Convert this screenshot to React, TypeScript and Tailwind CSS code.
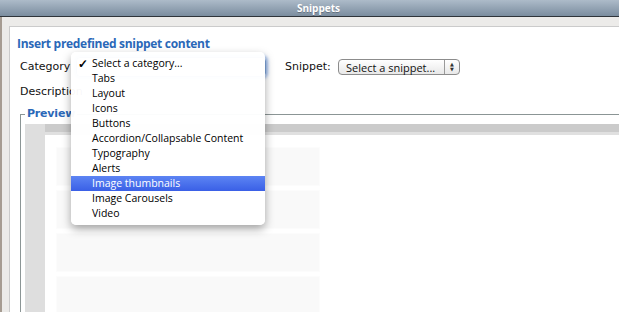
import React from "react";

const items = [
  "Select a category...",
  "Tabs",
  "Layout",
  "Icons",
  "Buttons",
  "Accordion/Collapsable Content",
  "Typography",
  "Alerts",
  "Image thumbnails",
  "Image Carousels",
  "Video",
];

export default function App() {
  return (
    <div className="relative w-[619px] h-[312px] overflow-hidden bg-[#ecebe9] font-['DejaVu_Sans',sans-serif]">
      <div className="h-[17px] bg-gradient-to-b from-[#adbbc9] to-[#7b8d9f] border-b border-[#2f343a] flex items-center justify-center pl-[18px]">
        <span className="text-white font-bold text-[10px] leading-none font-['Open_Sans',sans-serif] [text-shadow:0_1px_0_rgba(0,0,0,0.25)]">Snippets</span>
      </div>
      <div className="flex h-[295px]">
        <div className="w-[2px] bg-[#a69c92]" />
        <div className="flex-1 pt-[9px] pl-[7px] flex flex-col">
          <div className="flex-1 bg-white border-l border-t border-[#cbcbcb] pl-[7px] pt-[9px] flex flex-col">
            <h1 className="text-[#2a68b8] font-bold text-[12px] leading-[16px] tracking-[-0.3px] font-['Open_Sans',sans-serif]">Insert predefined snippet content</h1>
            <div className="flex items-center mt-[5px] pl-[3px] h-[20px] text-[11px] text-[#111]">
              <span className="w-[56px]">Category</span>
              <div className="w-[190px] h-[20px] rounded-[4px] border border-[#7fa6dc] shadow-[0_0_3px_2px_rgba(100,150,230,0.6)]" />
              <span className="ml-[19px] w-[53px]">Snippet:</span>
              <div className="w-[122px] h-[16px] rounded-[4px] border border-[#8c8c8c] bg-gradient-to-b from-white to-[#e8e8e8] flex items-center">
                <span className="pl-[7px] flex-1 whitespace-nowrap text-[11px] leading-none font-['Open_Sans',sans-serif]">Select a snippet...</span>
                <span className="w-[15px] h-full border-l border-[#9a9a9a] flex flex-col items-center justify-center text-[5px] leading-[5px] text-[#333]">
                  <span>▲</span>
                  <span>▼</span>
                </span>
              </div>
            </div>
            <div className="mt-[7px] pl-[3px] h-[16px] flex items-center text-[11px] text-[#111]">Description</div>
            <div className="relative mt-[14px] ml-[3px] flex-1 border-l border-t border-[#8b9595] flex flex-col pl-[4px] pt-[9px]">
              <span className="absolute -top-[8px] left-[4px] bg-white px-[2px] text-[#2a68b8] font-bold text-[11px] leading-[14px] tracking-[-0.2px]">Preview</span>
              <div className="flex-1 flex">
                <div className="w-[20px] bg-[#dedede]" />
                <div className="flex-1 flex flex-col">
                  <div className="h-[8px] bg-[#cbcbcb]" />
                  <div className="h-[3px] bg-[#e0e0e0]" />
                  <div className="flex-1 bg-white pl-[11px] pt-[12px] flex flex-col gap-[4px]">
                    {[0, 1, 2, 3].map((i) => (
                      <div key={i} className="w-[264px] h-[39px] shrink-0 bg-[#f9f9f9] border border-[#fcfcfc]" />
                    ))}
                  </div>
                </div>
              </div>
            </div>
          </div>
        </div>
      </div>

      <div className="absolute left-[71px] top-[52px] w-[194px] rounded-[5px] bg-white/[0.97] shadow-[0_4px_10px_rgba(0,0,0,0.35)] py-[4px] font-['Open_Sans',sans-serif] text-[10.5px] text-black">
        {items.map((it, i) => (
          <div
            key={it}
            className={
              i === 8
                ? "h-[15px] leading-[15px] pl-[21px] relative whitespace-nowrap text-white bg-gradient-to-b from-[#5d84f3] to-[#3a5fe6]"
                : "h-[15px] leading-[15px] pl-[21px] relative whitespace-nowrap"
            }
          >
            {i === 0 && <span className="absolute left-[7px] top-0 text-[12px] font-bold">✓</span>}
            {it}
          </div>
        ))}
      </div>
    </div>
  );
}
